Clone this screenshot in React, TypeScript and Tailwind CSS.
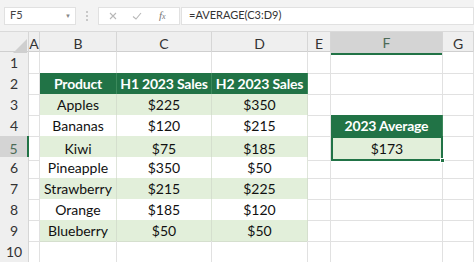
import React from "react";

const gridCols = "grid-cols-[29px_11px_77px_95px_96px_23px_112px_1fr]";

type Cell = { text?: string; kind?: "hdr" | "alt" | "plain" | "sel" };

const data: [string, string, string][] = [
  ["Apples", "$225", "$350"],
  ["Bananas", "$120", "$215"],
  ["Kiwi", "$75", "$185"],
  ["Pineapple", "$350", "$50"],
  ["Strawberry", "$215", "$225"],
  ["Orange", "$185", "$120"],
  ["Blueberry", "$50", "$50"],
];

function buildRow(r: number): Cell[] {
  const row: Cell[] = [{}, {}, {}, {}, {}, {}, {}];
  if (r === 2) {
    row[1] = { text: "Product", kind: "hdr" };
    row[2] = { text: "H1 2023 Sales", kind: "hdr" };
    row[3] = { text: "H2 2023 Sales", kind: "hdr" };
  } else if (r >= 3 && r <= 9) {
    const d = data[r - 3];
    const k = r % 2 === 1 ? "alt" : "plain";
    row[1] = { text: d[0], kind: k };
    row[2] = { text: d[1], kind: k };
    row[3] = { text: d[2], kind: k };
  }
  if (r === 4) row[5] = { text: "2023 Average", kind: "hdr" };
  if (r === 5) row[5] = { text: "$173", kind: "sel" };
  return row;
}

export default function App() {
  const font = { fontFamily: "Lato, 'Open Sans', sans-serif" };
  const letters = ["A", "B", "C", "D", "E", "F", "G"];
  return (
    <div className="w-[474px] h-[262px] overflow-hidden bg-white" style={font}>
      {/* formula bar */}
      <div className="h-[32px] bg-[#f3f3f3] flex items-center pl-[4px] border-b border-[#dadada]">
        <div className="w-[72px] h-[18px] bg-white border border-[#e1e1e1] flex items-center justify-between pl-[5px] pr-[4px] text-[11px] text-[#444]">
          <span>F5</span>
          <span className="text-[6px] text-[#888]">▼</span>
        </div>
        <div className="w-[22px] flex flex-col items-center gap-[2px]">
          <span className="w-[2px] h-[2px] bg-[#c8c8c8]" />
          <span className="w-[2px] h-[2px] bg-[#c8c8c8]" />
          <span className="w-[2px] h-[2px] bg-[#c8c8c8]" />
        </div>
        <div className="w-[82px] h-[18px] bg-white border border-[#e1e1e1] flex items-center">
          <svg width="60" height="16" viewBox="0 0 60 16">
            <path d="M11 5 L17 11 M17 5 L11 11" stroke="#b8b8b8" strokeWidth="1.1" fill="none" />
            <path d="M34 8.5 L37 11 L42 5" stroke="#b8b8b8" strokeWidth="1.1" fill="none" />
          </svg>
          <span className="text-[11px] italic text-[#777] leading-none" style={{ fontFamily: "'Liberation Serif', serif" }}>
            f<span className="text-[8px]">x</span>
          </span>
        </div>
        <div className="flex-1 h-[18px] ml-[1px] bg-white border border-[#e1e1e1] flex items-center pl-[7px] text-[11px] text-[#333]">
          =AVERAGE(C3:D9)
        </div>
      </div>
      {/* column header */}
      <div className={`grid ${gridCols} h-[20px] bg-[#efefef] border-b border-[#cfcfcf]`}>
        <div className="relative border-r border-[#d6d6d6]">
          <div
            className="absolute right-[1px] bottom-[2px] w-[14px] h-[14px] bg-[#cfcfcf]"
            style={{ clipPath: "polygon(100% 0, 100% 100%, 0 100%)" }}
          />
        </div>
        {letters.map((l) => (
          <div
            key={l}
            className={`flex items-center justify-center text-[14px] border-r border-[#d6d6d6] ${
              l === "F" ? "bg-[#d4d4d4] border-b-2 border-b-[#217346] text-[#4d6b57]" : "text-[#333]"
            }`}
          >
            {l}
          </div>
        ))}
      </div>
      {/* rows */}
      {Array.from({ length: 10 }, (_, i) => i + 1).map((r) => {
        const row = buildRow(r);
        return (
          <div key={r} className={`grid ${gridCols} h-[21px]`}>
            <div
              className={`flex items-center justify-center text-[14px] border-b border-r ${
                r === 5
                  ? "bg-[#d4d4d4] text-[#4d6b57] border-r-2 border-r-[#217346] border-b-[#cfcfcf]"
                  : "bg-[#efefef] text-[#333] border-[#d6d6d6]"
              }`}
            >
              {r}
            </div>
            {row.map((c, ci) => {
              let cls = "border-b border-r border-[#e1e1e1]";
              if (c.kind === "hdr") cls = "bg-[#217346] text-white font-bold tracking-[-0.2px] border-r border-b border-[#3c8a5c]";
              else if (c.kind === "alt") cls = "bg-[#e2efda] text-[#111] border-r border-b border-[#d5dfce]";
              else if (c.kind === "plain") cls = "bg-white text-[#111] border-r border-b border-[#dfe5db]";
              else if (c.kind === "sel") cls = "relative bg-[#e2efda] text-[#111] border-2 border-[#217346]";
              return (
                <div key={ci} className={`flex items-center justify-center text-[14px] whitespace-nowrap ${cls}`}>
                  {c.text}
                  {c.kind === "sel" && (
                    <span className="absolute right-[-4px] bottom-[-4px] w-[5px] h-[5px] bg-[#217346] border border-white" />
                  )}
                </div>
              );
            })}
          </div>
        );
      })}
    </div>
  );
}
